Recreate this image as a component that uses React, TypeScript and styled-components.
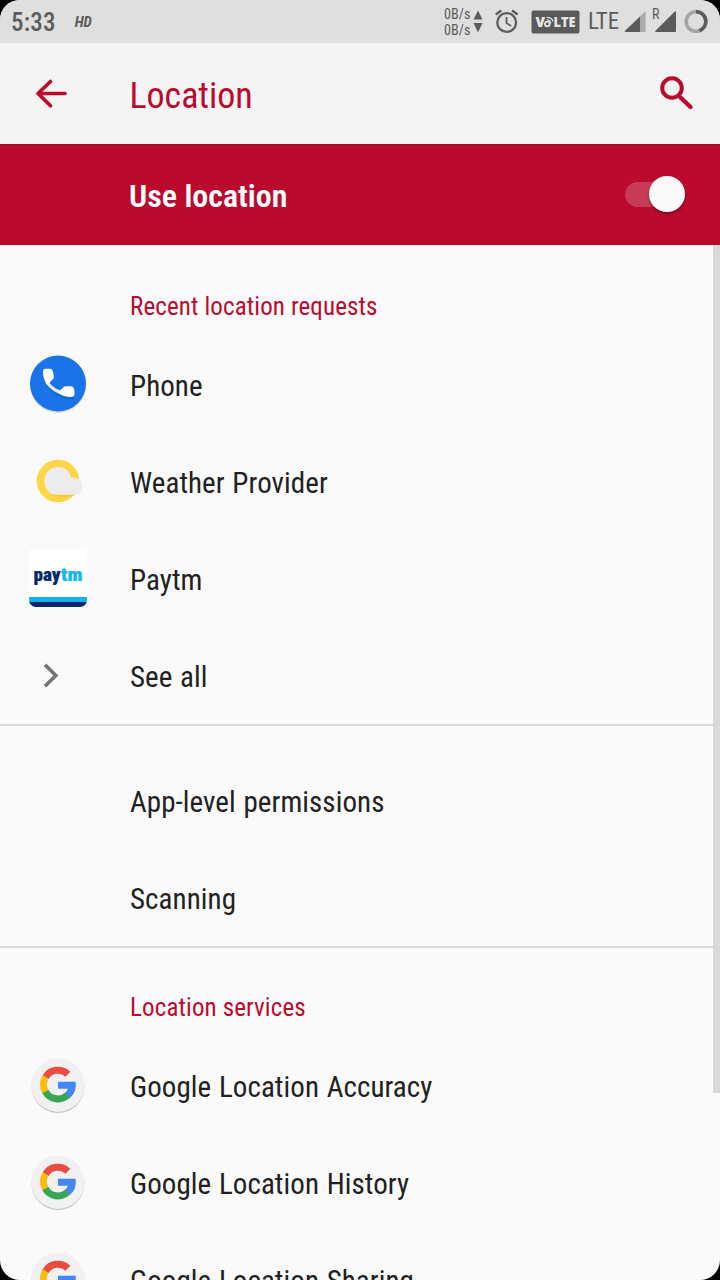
import React from "react";
import styled, { createGlobalStyle } from "styled-components";

const GlobalStyle = createGlobalStyle`
  html, body { margin: 0; padding: 0; background: #000; overflow: hidden; }
  * { box-sizing: border-box; }
`;

const RED = "#bb0a2d";

const Screen = styled.div`
  width: 720px;
  height: 1280px;
  overflow: hidden;
  display: flex;
  flex-direction: column;
  background: #fafafa;
  border-radius: 20px;
  font-family: "Roboto Condensed", Roboto, sans-serif;
  font-stretch: 75%;
  color: #212121;
`;

const StatusBar = styled.header`
  flex: none;
  height: 43px;
  display: flex;
  align-items: center;
  justify-content: space-between;
  padding: 0 12px 0 11px;
  background: #dfdfdf;
  color: #5c5c5c;
`;

const StatusGroup = styled.div`
  display: flex;
  align-items: center;
  height: 43px;
`;

const Clock = styled.span`
  font-size: 25px;
  font-weight: 500;
  line-height: 43px;
  letter-spacing: 0.2px;
  padding-top: 2px;
`;

const HdMark = styled.span`
  margin: 1px 0 0 19px;
  font-size: 15px;
  font-weight: 700;
  font-style: italic;
  line-height: 43px;
`;

const NetSpeed = styled.div`
  font-size: 14px;
  line-height: 16px;
  letter-spacing: 0.1px;
  width: 29px;
  white-space: nowrap;
`;

const Lte = styled.span`
  font-size: 23px;
  line-height: 41px;
  margin: -1px 0 0 8px;
  width: 36px;
`;

const Toolbar = styled.nav`
  flex: none;
  height: 101px;
  display: flex;
  align-items: center;
  padding: 0 24px 0 32px;
  background: #f4f4f4;
  color: ${RED};
`;

const Title = styled.h1`
  flex: 1;
  margin: 5px 0 0 59.5px;
  font-size: 36px;
  font-weight: 400;
  letter-spacing: -0.05px;
`;

const SwitchBar = styled.section`
  flex: none;
  height: 101px;
  display: flex;
  align-items: center;
  justify-content: space-between;
  padding: 0 35px 0 129px;
  background: ${RED};
  color: #fff;
  box-shadow: inset 0 2px 2px -1px rgba(0, 0, 0, 0.15);
`;

const SwitchLabel = styled.span`
  font-size: 32px;
  font-weight: 600;
  padding-top: 2px;
`;

const Track = styled.div`
  width: 60px;
  height: 25px;
  margin-top: -1px;
  border-radius: 13px;
  background: rgba(255, 255, 255, 0.2);
  display: flex;
  align-items: center;
  justify-content: flex-end;
`;

const Thumb = styled.div`
  flex: none;
  width: 36px;
  height: 36px;
  border-radius: 50%;
  background: #fafafa;
  box-shadow: 0 2px 3px rgba(0, 0, 0, 0.35);
`;

const Body = styled.div`
  flex: 1;
  min-height: 0;
  display: flex;
  align-items: flex-start;
  overflow: hidden;
`;

const List = styled.main`
  flex: 1;
  margin-right: -7px;
`;

const ScrollThumb = styled.div`
  flex: none;
  width: 7px;
  height: 848px;
  background: #d9d9d9;
`;

const Group = styled.section<{ $top?: number; $last?: boolean }>`
  padding-top: ${(p) => p.$top ?? 0}px;
  border-bottom: ${(p) => (p.$last ? "none" : "2px solid #dadada")};
`;

const Category = styled.h2<{ $height: number; $shift: number }>`
  margin: 0;
  height: ${(p) => p.$height}px;
  padding: ${(p) => p.$shift}px 0 0 130px;
  font-size: 25px;
  line-height: 30px;
  font-weight: 400;
  letter-spacing: 0.13px;
  color: ${RED};
`;

const Row = styled.div<{ $height?: number }>`
  height: ${(p) => p.$height ?? 97}px;
  display: flex;
  align-items: flex-start;
`;

const IconSlot = styled.div`
  width: 130px;
  height: 94px;
  flex: none;
  display: flex;
  align-items: center;
  padding-left: 28px;
`;

const Label = styled.span`
  font-size: 29px;
  line-height: 98px;
  letter-spacing: 0.08px;
  word-spacing: 0.9px;
  white-space: nowrap;
`;

const PaytmTile = styled.div`
  width: 58px;
  height: 58px;
  margin: -1px 0 0 1px;
  display: flex;
  flex-direction: column;
  border-radius: 4px 4px 7px 7px;
  overflow: hidden;
  background: linear-gradient(#fff 0 48px, #0fb4ec 48px 53px, #03286c 53px);
`;

const BackIcon = () => (
  <svg width="38" height="38" viewBox="0 0 38 38" fill="none" stroke="currentColor" strokeWidth="3.6" strokeLinecap="round" strokeLinejoin="round">
    <path d="M33 18.5H6M18.5 6.5L6 18.5L18.5 30.8" />
  </svg>
);

const SearchIcon = () => (
  <svg width="38" height="38" viewBox="0 0 38 38" fill="none" stroke="currentColor" strokeLinecap="round">
    <circle cx="14" cy="13" r="9.8" strokeWidth="4" />
    <path d="M22.5 22.5L32.5 32" strokeWidth="4.4" />
  </svg>
);

const SpeedArrows = () => (
  <svg width="10" height="24" viewBox="0 0 10 24" fill="currentColor">
    <path d="M5 .5L9.5 9.5H.5ZM5 22.5L.5 13H9.5Z" />
  </svg>
);

const AlarmIcon = () => (
  <svg width="24" height="26" viewBox="0 0 24 26" fill="none" stroke="currentColor" style={{ marginLeft: 12 }}>
    <circle cx="11.7" cy="13.5" r="9.4" strokeWidth="2.3" />
    <path d="M11.5 8V14L16.2 17" strokeWidth="1.8" />
    <path d="M.8 5.5L6.3 1.5M22.6 5.5L17.1 1.5" strokeWidth="2.4" />
  </svg>
);

const VolteBadge = () => (
  <svg width="49" height="24" viewBox="0 0 49 24" style={{ marginLeft: 12 }}>
    <rect x="0.5" y="0.5" width="48" height="23" rx="2" fill="#5a5a5a" />
    <g fill="#e6e6e6" fontFamily='"Open Sans", sans-serif' fontWeight="800" style={{ fontStretch: "100%" }}>
      <text x="4.5" y="17" fontSize="14" textLength="9.5" lengthAdjust="spacingAndGlyphs">V</text>
      <text x="22.5" y="17" fontSize="14" textLength="22" lengthAdjust="spacingAndGlyphs">LTE</text>
    </g>
    <g fill="none" stroke="#e6e6e6">
      <circle cx="16.3" cy="14" r="2.3" strokeWidth="1.8" />
      <path d="M15.7 9.8Q19.3 9.8 20 13.4M15.7 7.4Q21 7.3 22 11.5" strokeWidth="1.1" />
    </g>
  </svg>
);

const Signal = ({ weak }: { weak?: boolean }) => (
  <svg width="22" height="22" viewBox="0 0 22 22">
    {weak ? (
      <>
        <path d="M21.5 0V21H16V5.5Z" fill="#aaa" />
        <path d="M16 5.5V21H2Q0 21 1 19.7Z" fill="#5a5a5a" />
      </>
    ) : (
      <path d="M21 1V20Q21 21 20 21H1.5Q-.5 21 .5 19.7L19.5 .7Q21 -.5 21 1Z" fill="#5a5a5a" />
    )}
  </svg>
);

const Roaming = styled.span`
  font-size: 14px;
  line-height: 14px;
  margin: 0 -5px 16px 6px;
  width: 8px;
`;

const Battery = () => (
  <svg width="24" height="24" viewBox="0 0 24 24" fill="none" strokeWidth="3.6" style={{ marginLeft: 7 }}>
    <circle cx="12" cy="11.5" r="9.8" stroke="#a5a5a5" />
    <path d="M12 1.7A9.8 9.8 0 0 1 15.4 20.7" stroke="#5c5c5c" />
  </svg>
);

const PhoneIcon = () => (
  <svg width="60" height="62" viewBox="0 0 60 62">
    <circle cx="30" cy="32" r="28" fill="#000" opacity=".14" />
    <circle cx="30" cy="30.5" r="28" fill="#1a73e8" />
    <path d="M16.5 19Q19 38 41 45.5L45 42L47 45.5Q43 47 38 46Q20 41 15.5 25Z" fill="#1257b5" opacity=".5" />
    <path d="M21 29.5Q26 35.5 32.5 37.5L30.5 40.5Q22.5 37 18 30.5Z" fill="#e8eaed" />
    <path d="M17.5 15.7H22.2Q24.3 15.7 24.8 18L25.8 23Q26.2 24.8 25 26L21.3 30L18.5 31.5Q14.8 24.5 15 18.5Q15 15.7 17.5 15.7Z" fill="#fff" />
    <path d="M32 37.5L35.7 33.9Q36.7 33 38 33.2L43.6 33.2Q46 33.8 46.5 38V41Q46.5 44 43 44Q37 44.5 30.5 40.5Z" fill="#fff" />
  </svg>
);

const WeatherIcon = () => (
  <svg width="60" height="62" viewBox="0 0 60 62">
    <circle cx="30" cy="31" r="21.3" fill="#fdd648" />
    <path d="M24 44.5Q34 49 48 45L44 36H20Z" fill="#e9b92e" opacity=".5" />
    <path d="M30 17C37 17 42 21.5 43 27.7C50 26.5 54.5 31 54.5 36.5C54.5 41.5 51 44.8 46 44.8H28C21 44.8 16.5 38 16.5 31C16.5 22.5 22 17 30 17Z" fill="#ececec" />
  </svg>
);

const PaytmIcon = () => (
  <PaytmTile>
    <svg width="58" height="48" viewBox="0 0 58 48" fontFamily='Roboto, sans-serif' fontWeight="900" fontSize="19" strokeWidth=".2">
      <text x="4.5" y="32" fill="#03286c" stroke="#03286c" textLength="27" lengthAdjust="spacingAndGlyphs">pay</text>
      <text x="32" y="32" fill="#16b7ee" stroke="#16b7ee" textLength="21.5" lengthAdjust="spacingAndGlyphs">tm</text>
    </svg>
  </PaytmTile>
);

const ChevronIcon = () => (
  <svg width="60" height="62" viewBox="0 0 60 62" fill="none" stroke="#757575" strokeWidth="3.6">
    <path d="M17 20.8L27.8 31.5L17 42.2" />
  </svg>
);

const GoogleIcon = () => (
  <svg width="60" height="62" viewBox="0 0 60 62">
    <circle cx="30" cy="32.5" r="26.5" fill="#c4c4c4" />
    <circle cx="30" cy="31.2" r="26.7" fill="#f1f1f1" />
    <g fill="none" strokeWidth="7">
      <path d="M39.9 20.2A14.4 14.4 0 0 0 17.4 23.4" stroke="#ea4c3f" />
      <path d="M17.7 22.9A14.4 14.4 0 0 0 17.7 38.3" stroke="#fbbc12" />
      <path d="M17.4 37.6A14.4 14.4 0 0 0 40 40.8" stroke="#38a753" />
    </g>
    <path d="M30 27.7H47.6Q49 37.5 42.5 43.5L37 39.2Q39 37.5 39.8 34.7H30Z" fill="#4586f3" />
  </svg>
);

const Item = ({ label, icon, height }: { label: string; icon?: React.ReactNode; height?: number }) => (
  <Row $height={height}>
    <IconSlot>{icon}</IconSlot>
    <Label>{label}</Label>
  </Row>
);

export default function App() {
  return (
    <>
      <GlobalStyle />
      <Screen>
        <StatusBar>
          <StatusGroup>
            <Clock>5:33</Clock>
            <HdMark>HD</HdMark>
          </StatusGroup>
          <StatusGroup>
            <NetSpeed>
              <div>0B/s</div>
              <div>0B/s</div>
            </NetSpeed>
            <SpeedArrows />
            <AlarmIcon />
            <VolteBadge />
            <Lte>LTE</Lte>
            <Signal weak />
            <Roaming>R</Roaming>
            <Signal />
            <Battery />
          </StatusGroup>
        </StatusBar>
        <Toolbar>
          <BackIcon />
          <Title>Location</Title>
          <SearchIcon />
        </Toolbar>
        <SwitchBar>
          <SwitchLabel>Use location</SwitchLabel>
          <Track>
            <Thumb />
          </Track>
        </SwitchBar>
        <Body>
          <List>
            <Group>
              <Category $height={92} $shift={47}>Recent location requests</Category>
              <Item label="Phone" icon={<PhoneIcon />} />
              <Item label="Weather Provider" icon={<WeatherIcon />} />
              <Item label="Paytm" icon={<PaytmIcon />} />
              <Item label="See all" icon={<ChevronIcon />} height={96} />
            </Group>
            <Group $top={27}>
              <Item label="App-level permissions" />
              <Item label="Scanning" height={96} />
            </Group>
            <Group $last>
              <Category $height={90} $shift={45}>Location services</Category>
              <Item label="Google Location Accuracy" icon={<GoogleIcon />} />
              <Item label="Google Location History" icon={<GoogleIcon />} />
              <Item label="Google Location Sharing" icon={<GoogleIcon />} />
            </Group>
          </List>
          <ScrollThumb />
        </Body>
      </Screen>
    </>
  );
}
